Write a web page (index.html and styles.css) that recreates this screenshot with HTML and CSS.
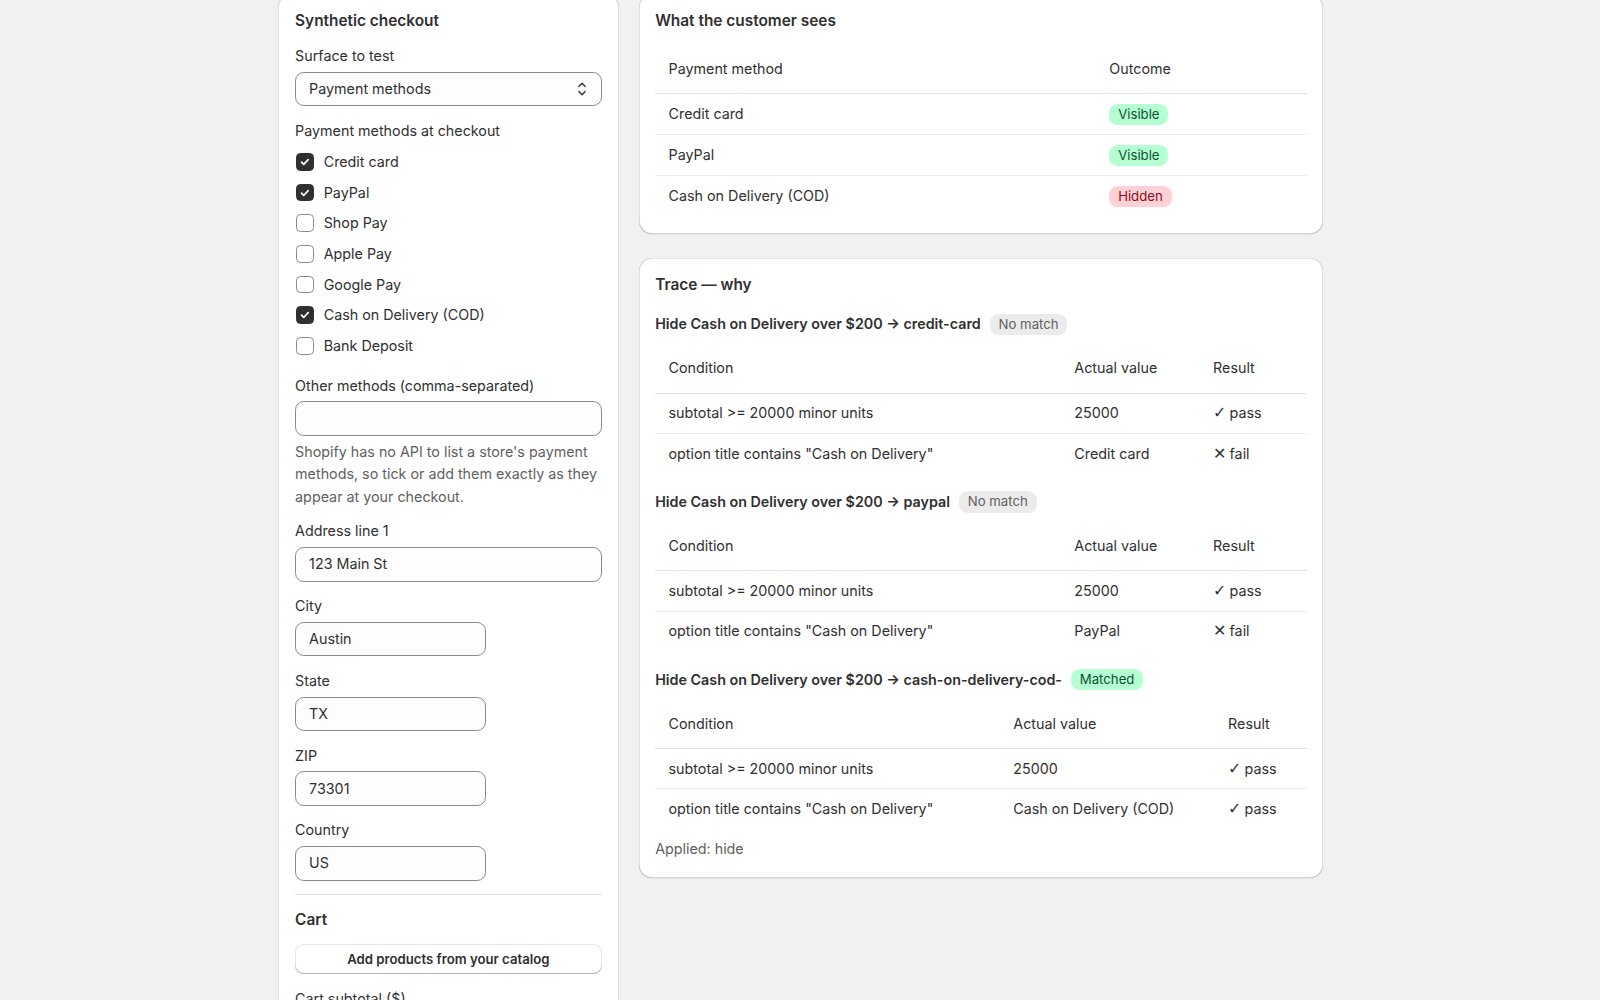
FILE: index.html
```html
<!DOCTYPE html>
<html lang="en">
  <head>
    <meta charset="utf-8">
    <title>Synthetic checkout</title>
    <link rel="stylesheet" href="styles.css">
  </head>
  <body>
    <div class="layout">
      <section class="card form-card">
        <h2 class="card-title">Synthetic checkout</h2>

        <div class="field">
          <div class="label">Surface to test</div>
          <div class="select">
            <span>Payment methods</span>
            <svg class="select-icon" viewBox="0 0 20 20"><path d="M7.2 7.6l2.8-2.8 2.8 2.8M7.2 12.4l2.8 2.8 2.8-2.8"/></svg>
          </div>
        </div>

        <div class="field">
          <div class="label">Payment methods at checkout</div>
          <ul class="choices">
            <li class="choice"><span class="box checked"><svg viewBox="0 0 16 16"><path d="M4.6 8.3l2.3 2.3 4.6-4.8"/></svg></span>Credit card</li>
            <li class="choice"><span class="box checked"><svg viewBox="0 0 16 16"><path d="M4.6 8.3l2.3 2.3 4.6-4.8"/></svg></span>PayPal</li>
            <li class="choice"><span class="box"></span>Shop Pay</li>
            <li class="choice"><span class="box"></span>Apple Pay</li>
            <li class="choice"><span class="box"></span>Google Pay</li>
            <li class="choice"><span class="box checked"><svg viewBox="0 0 16 16"><path d="M4.6 8.3l2.3 2.3 4.6-4.8"/></svg></span>Cash on Delivery (COD)</li>
            <li class="choice"><span class="box"></span>Bank Deposit</li>
          </ul>
        </div>

        <div class="field">
          <div class="label">Other methods (comma-separated)</div>
          <div class="input"></div>
          <p class="help">Shopify has no API to list a store's payment methods, so tick or add them exactly as they appear at your checkout.</p>
        </div>

        <div class="field">
          <div class="label">Address line 1</div>
          <div class="input">123 Main St</div>
        </div>
        <div class="field">
          <div class="label">City</div>
          <div class="input short">Austin</div>
        </div>
        <div class="field">
          <div class="label">State</div>
          <div class="input short">TX</div>
        </div>
        <div class="field">
          <div class="label">ZIP</div>
          <div class="input short">73301</div>
        </div>
        <div class="field">
          <div class="label">Country</div>
          <div class="input short">US</div>
        </div>

        <hr class="divider">
        <h3 class="section-title">Cart</h3>
        <button class="button" type="button">Add products from your catalog</button>
        <div class="field">
          <div class="label">Cart subtotal ($)</div>
          <div class="input short">250.00</div>
        </div>
      </section>

      <div class="stack">
        <section class="card">
          <h2 class="card-title">What the customer sees</h2>
          <table class="table">
            <thead>
              <tr><th class="w-method">Payment method</th><th>Outcome</th></tr>
            </thead>
            <tbody>
              <tr><td>Credit card</td><td><span class="badge success">Visible</span></td></tr>
              <tr><td>PayPal</td><td><span class="badge success">Visible</span></td></tr>
              <tr><td>Cash on Delivery (COD)</td><td><span class="badge critical">Hidden</span></td></tr>
            </tbody>
          </table>
        </section>

        <section class="card">
          <h2 class="card-title">Trace — why</h2>

          <div class="rule">
            <div class="rule-head">
              <span class="rule-name">Hide Cash on Delivery over $200 → credit-card</span>
              <span class="badge">No match</span>
            </div>
            <table class="table">
              <thead>
                <tr><th class="w-cond">Condition</th><th class="w-value">Actual value</th><th>Result</th></tr>
              </thead>
              <tbody>
                <tr><td>subtotal &gt;= 20000 minor units</td><td>25000</td><td><span class="mark">✓</span> pass</td></tr>
                <tr><td>option title contains "Cash on Delivery"</td><td>Credit card</td><td><span class="mark">✕</span> fail</td></tr>
              </tbody>
            </table>
          </div>

          <div class="rule">
            <div class="rule-head">
              <span class="rule-name">Hide Cash on Delivery over $200 → paypal</span>
              <span class="badge">No match</span>
            </div>
            <table class="table">
              <thead>
                <tr><th class="w-cond">Condition</th><th class="w-value">Actual value</th><th>Result</th></tr>
              </thead>
              <tbody>
                <tr><td>subtotal &gt;= 20000 minor units</td><td>25000</td><td><span class="mark">✓</span> pass</td></tr>
                <tr><td>option title contains "Cash on Delivery"</td><td>PayPal</td><td><span class="mark">✕</span> fail</td></tr>
              </tbody>
            </table>
          </div>

          <div class="rule">
            <div class="rule-head">
              <span class="rule-name">Hide Cash on Delivery over $200 → cash-on-delivery-cod-</span>
              <span class="badge success">Matched</span>
            </div>
            <table class="table">
              <thead>
                <tr><th class="w-cond-b">Condition</th><th class="w-value-b">Actual value</th><th>Result</th></tr>
              </thead>
              <tbody>
                <tr><td>subtotal &gt;= 20000 minor units</td><td>25000</td><td><span class="mark">✓</span> pass</td></tr>
                <tr><td>option title contains "Cash on Delivery"</td><td>Cash on Delivery (COD)</td><td><span class="mark">✓</span> pass</td></tr>
              </tbody>
            </table>
            <p class="applied">Applied: hide</p>
          </div>
        </section>
      </div>
    </div>
  </body>
</html>
```

FILE: styles.css
```css
body {
  margin: 0;
  background-color: #f1f1f1;
  color: #303030;
  font-family: Inter, "Noto Sans", "Liberation Sans", sans-serif;
  font-size: 14.3px;
  line-height: 22px;
}

.layout {
  display: grid;
  grid-template-columns: 1fr 2fr;
  gap: 20px;
  width: 1045px;
  margin: -6.5px auto 0;
  align-items: start;
}

.stack {display: flex; flex-direction: column; gap: 24px}

.card {
  display: flex;
  flex-direction: column;
  gap: 17.6px;
  padding: 16px 16px 18px;
  background-color: #fff;
  border-radius: 13px;
  box-shadow: 0 1px 0 0 rgba(26, 26, 26, .07),
    inset 1px 0 0 0 rgba(0, 0, 0, .13),
    inset -1px 0 0 0 rgba(0, 0, 0, .13),
    inset 0 -1px 0 0 rgba(0, 0, 0, .17),
    inset 0 1px 0 0 rgba(204, 204, 204, .5);
}
.form-card {gap: 13.5px; padding: 16px 17.6px 40px}

.card-title {margin: 0; font-size: 15.4px; font-weight: 600; line-height: 22px}
.section-title {margin: 1.5px 0 0; font-size: 15.4px; font-weight: 600; line-height: 20px}

.field {display: flex; flex-direction: column; gap: 4.7px}
.label {line-height: 22px}

.select, .input {
  box-sizing: border-box;
  display: flex;
  align-items: center;
  height: 34.6px;
  padding: 0 13px;
  background-color: #fdfdfd;
  border: 1px solid #8a8a8a;
  border-radius: 8.8px;
}
.select {justify-content: space-between; padding-right: 8px}
.select-icon {width: 22px; height: 22px; fill: none; stroke: #4a4a4a; stroke-width: 1.5; stroke-linecap: round; stroke-linejoin: round}
.input.short {width: 191px}

.choices {list-style: none; margin: 0; padding: 0}
.choice {display: flex; align-items: center; gap: 10px; padding: 4.35px 0; line-height: 22px}
.box {
  box-sizing: border-box;
  width: 17.6px;
  height: 17.6px;
  margin-left: 1px;
  border: 1px solid #8a8a8a;
  border-radius: 4.4px;
  background-color: #fff;
}
.box.checked {display: flex; background-color: #303030; border-color: #303030}
.box svg {width: 100%; height: 100%; fill: none; stroke: #fff; stroke-width: 1.7; stroke-linecap: round; stroke-linejoin: round}

.help {margin: 0 0 -1.5px; color: #616161; line-height: 22.5px}

.divider {width: 100%; margin: 0; border: 0; border-top: 1px solid #e3e3e3}

.button {
  height: 30.5px;
  padding: 0 12px;
  background-color: #fff;
  border: 0;
  border-radius: 8.8px;
  box-shadow: inset 0 -1px 0 0 #b5b5b5, inset 0 0 0 1px rgba(0, 0, 0, .1), inset 0 .5px 0 1.5px #fff;
  color: #303030;
  font-family: inherit;
  font-size: 13.2px;
  font-weight: 600;
}

.table {width: 100%; border-collapse: collapse}
.table th, .table td {padding: 8.7px 13.4px; text-align: left; vertical-align: middle}
.table th {padding-bottom: 13.5px; font-weight: 400; border-bottom: 1px solid #e3e3e3}
.table td {border-top: 1px solid #ebebeb}
.table tbody tr:first-child td {border-top: 0}
.w-method {width: 414px}
.w-cond {width: 379px}
.w-value {width: 112px}
.w-cond-b {width: 318px}
.w-value-b {width: 188px}
.mark {font-family: "DejaVu Sans", sans-serif; font-size: 16px; line-height: 20px; margin-right: -1px}

.rule {display: flex; flex-direction: column; gap: 13.2px}
.rule-head {display: flex; align-items: center; gap: 9px}
.rule-name {font-weight: 600}

.badge {
  display: inline-block;
  padding: 0 8.8px;
  line-height: 21.4px;
  border-radius: 8.8px;
  background-color: #ebebeb;
  color: #616161;
  font-size: 13.2px;
}
.badge.success {background-color: #b4fed2; color: #0c5132}
.badge.critical {background-color: #fed1d7; color: #8e0b21}

.applied {margin: -4.4px 0 0; color: #616161}
```
